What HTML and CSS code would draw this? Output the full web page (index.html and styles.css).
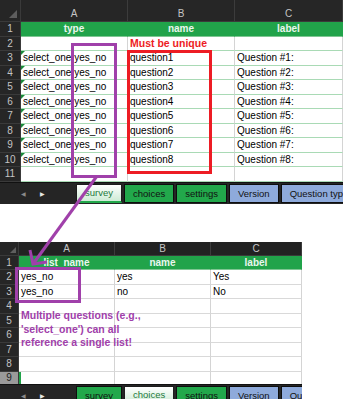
FILE: index.html
```html
<!DOCTYPE html>
<html lang="en">
<head>
  <meta charset="UTF-8" />
  <meta name="viewport" content="width=device-width, initial-scale=1.0" />
  <title>Survey and choices sheets</title>
  <link rel="stylesheet" href="styles.css">
</head>
<body>
  <div class="page">

    <!-- survey sheet -->
    <section class="sheet sheet-top">
      <div class="grid top-grid">
        <div class="corner"></div>
        <div class="ch">A</div>
        <div class="ch">B</div>
        <div class="ch">C</div>

        <div class="rh">1</div>
        <div class="cell hdr">type</div>
        <div class="cell hdr">name</div>
        <div class="cell hdr">label</div>

        <div class="rh">2</div>
        <div class="cell"></div>
        <div class="cell"><span class="must">Must be unique</span></div>
        <div class="cell"></div>

        <div class="rh">3</div>
        <div class="cell flag">select_one yes_no</div>
        <div class="cell">question1</div>
        <div class="cell">Question #1:</div>

        <div class="rh">4</div>
        <div class="cell flag">select_one yes_no</div>
        <div class="cell">question2</div>
        <div class="cell">Question #2:</div>

        <div class="rh">5</div>
        <div class="cell flag">select_one yes_no</div>
        <div class="cell">question3</div>
        <div class="cell">Question #3:</div>

        <div class="rh">6</div>
        <div class="cell flag">select_one yes_no</div>
        <div class="cell">question4</div>
        <div class="cell">Question #4:</div>

        <div class="rh">7</div>
        <div class="cell flag">select_one yes_no</div>
        <div class="cell">question5</div>
        <div class="cell">Question #5:</div>

        <div class="rh">8</div>
        <div class="cell flag">select_one yes_no</div>
        <div class="cell">question6</div>
        <div class="cell">Question #6:</div>

        <div class="rh">9</div>
        <div class="cell flag">select_one yes_no</div>
        <div class="cell">question7</div>
        <div class="cell">Question #7:</div>

        <div class="rh">10</div>
        <div class="cell flag">select_one yes_no</div>
        <div class="cell">question8</div>
        <div class="cell">Question #8:</div>

        <div class="rh">11</div>
        <div class="cell"></div>
        <div class="cell"></div>
        <div class="cell"></div>
      </div>

      <div class="tabbar">
        <div class="nav"><span class="arr dim">&#9664;</span><span class="arr">&#9654;</span></div>
        <div class="tab active">survey</div>
        <div class="tab green">choices</div>
        <div class="tab green">settings</div>
        <div class="tab blue">Version</div>
        <div class="tab blue">Question types</div>
      </div>
    </section>

    <!-- choices sheet -->
    <section class="sheet sheet-bottom">
      <div class="grid bottom-grid">
        <div class="corner"></div>
        <div class="ch">A</div>
        <div class="ch">B</div>
        <div class="ch">C</div>

        <div class="rh">1</div>
        <div class="cell hdr">list_name</div>
        <div class="cell hdr">name</div>
        <div class="cell hdr">label</div>

        <div class="rh">2</div>
        <div class="cell">yes_no</div>
        <div class="cell">yes</div>
        <div class="cell">Yes</div>

        <div class="rh">3</div>
        <div class="cell">yes_no</div>
        <div class="cell">no</div>
        <div class="cell">No</div>

        <div class="rh">4</div>
        <div class="cell"></div>
        <div class="cell"></div>
        <div class="cell"></div>

        <div class="rh">5</div>
        <div class="cell"></div>
        <div class="cell"></div>
        <div class="cell"></div>

        <div class="rh">6</div>
        <div class="cell"></div>
        <div class="cell"></div>
        <div class="cell"></div>

        <div class="rh">7</div>
        <div class="cell"></div>
        <div class="cell"></div>
        <div class="cell"></div>

        <div class="rh">8</div>
        <div class="cell"></div>
        <div class="cell"></div>
        <div class="cell"></div>

        <div class="rh selected">9</div>
        <div class="cell current"></div>
        <div class="cell"></div>
        <div class="cell"></div>
      </div>

      <div class="tabbar">
        <div class="nav"><span class="arr dim">&#9664;</span><span class="arr">&#9654;</span></div>
        <div class="tab green">survey</div>
        <div class="tab active">choices</div>
        <div class="tab green">settings</div>
        <div class="tab blue">Version</div>
        <div class="tab blue">Question types</div>
      </div>
    </section>

    <!-- annotations drawn over the sheets -->
    <div class="box box-type"></div>
    <div class="box box-name"></div>
    <div class="box box-list"></div>
    <p class="note">Multiple questions (e.g., 'select_one') can all reference a single list!</p>
    <svg class="arrow" width="343" height="399" viewBox="0 0 343 399">
      <path d="M97 176 L33 264" />
      <path d="M30 250 L33 264 L47 262" />
    </svg>
  </div>
</body>
</html>
```

FILE: styles.css
```css
body {
  margin: 0;
  background-color: #ffffff;
  font-family: 'Liberation Sans', Arial, sans-serif;
  overflow: hidden;
}

.page {
  position: relative;
  width: 343px;
  height: 399px;
  overflow: hidden;
}

.sheet {
  overflow: hidden;
}

.sheet-bottom {
  width: 302px;
  margin-top: 38px;
}

.grid {
  display: grid;
  background-color: #ffffff;
}

.top-grid {
  grid-template-columns: 21px 107px 107px 108px;
  grid-template-rows: 22px;
  grid-auto-rows: 14.5px;
}

.bottom-grid {
  grid-template-columns: 19px 96px 96px 91px;
  grid-template-rows: 14px;
  grid-auto-rows: 14.5px;
  height: 142px;
  overflow: hidden;
}

/* headers */

.corner {
  position: relative;
  background-color: #262626;
  border-right: 1px solid #3a3a3a;
  border-bottom: 1px solid #3a3a3a;
}

.corner::after {
  content: '';
  position: absolute;
  right: 3px;
  bottom: 3px;
  border-left: 8px solid transparent;
  border-bottom: 8px solid #5e5e5e;
}

.bottom-grid .corner::after {
  border-left-width: 6px;
  border-bottom-width: 6px;
  right: 2px;
  bottom: 2px;
}

.ch {
  background-color: #262626;
  color: #c4c4c4;
  font-size: 10px;
  display: flex;
  align-items: flex-end;
  justify-content: center;
  padding-bottom: 2px;
  box-sizing: border-box;
  border-right: 1px solid #3c3c3c;
  border-bottom: 1px solid #3a3a3a;
}

.bottom-grid .ch {
  padding-bottom: 1px;
  background-color: #222222;
}

.rh {
  background-color: #262626;
  color: #c4c4c4;
  font-size: 10px;
  display: flex;
  align-items: center;
  justify-content: center;
  box-sizing: border-box;
  border-right: 1px solid #3a3a3a;
  border-bottom: 1px solid #3a3a3a;
}

.rh.selected {
  align-items: flex-start;
  line-height: 11px;
  background-color: #9a9a9a;
  color: #1e1e1e;
}

/* cells */

.cell {
  position: relative;
  box-sizing: border-box;
  font-size: 10px;
  line-height: 13.5px;
  color: #000000;
  padding-left: 2px;
  white-space: nowrap;
  border-right: 1px solid #d4d4d4;
  border-bottom: 1px solid #a9dab5;
}

.bottom-grid .cell {
  border-bottom-color: #d9d9d9;
}

.cell.hdr {
  background-color: #21a34a;
  color: #eaf6ee;
  font-weight: bold;
  text-align: center;
  padding-left: 0;
  border-right-color: #21a34a;
  border-bottom-color: #7fc693;
}

.cell.flag::before {
  content: '';
  position: absolute;
  left: 0;
  top: 0;
  border-top: 4px solid #1a8a3a;
  border-right: 4px solid transparent;
}

.cell.current {
  border-left: 2px solid #21a34a;
}

.must {
  color: #ed1c24;
  font-weight: bold;
  font-size: 10.5px;
}

/* sheet tabs */

.tabbar {
  display: flex;
  gap: 2px;
  height: 22px;
  padding: 1px 0;
  box-sizing: border-box;
  background-color: #252525;
  border-top: 1px solid #111111;
  white-space: nowrap;
  overflow: hidden;
}

.nav {
  display: flex;
  align-items: center;
  gap: 14px;
  width: 74px;
  flex-shrink: 0;
  padding-left: 21px;
  box-sizing: border-box;
}

.arr {
  font-size: 6px;
  color: #e6e6e6;
}

.arr.dim {
  color: #8a8a8a;
}

.tab {
  flex-shrink: 0;
  display: flex;
  align-items: center;
  padding: 0 8px;
  font-size: 9.5px;
  color: #111111;
  border: 1px solid #0e0e0e;
}

.tab.green {
  background-color: #22a84b;
}

.tab.blue {
  background-color: #8eaadb;
}

.tab.active {
  background: linear-gradient(#ffffff, #cdebd5);
  color: #1d7a3b;
  border-color: #1d1d1d;
  border-bottom: 2px solid #22a84b;
}

/* annotations */

.box {
  position: absolute;
  border: 3px solid #a040aa;
  box-sizing: border-box;
}

.box-type {
  left: 71px;
  top: 43px;
  width: 46px;
  height: 135px;
}

.box-name {
  left: 127px;
  top: 50px;
  width: 85px;
  height: 124px;
  border-color: #ed1c24;
}

.box-list {
  left: 15px;
  top: 267px;
  width: 66px;
  height: 36px;
}

.note {
  position: absolute;
  left: 21px;
  top: 309px;
  width: 135px;
  margin: 0;
  font-size: 10.5px;
  line-height: 13.5px;
  font-weight: bold;
  color: #a040aa;
}

.arrow {
  position: absolute;
  left: 0;
  top: 0;
  pointer-events: none;
}

.arrow path {
  fill: none;
  stroke: #a040aa;
  stroke-width: 3;
  stroke-linejoin: miter;
}
```
